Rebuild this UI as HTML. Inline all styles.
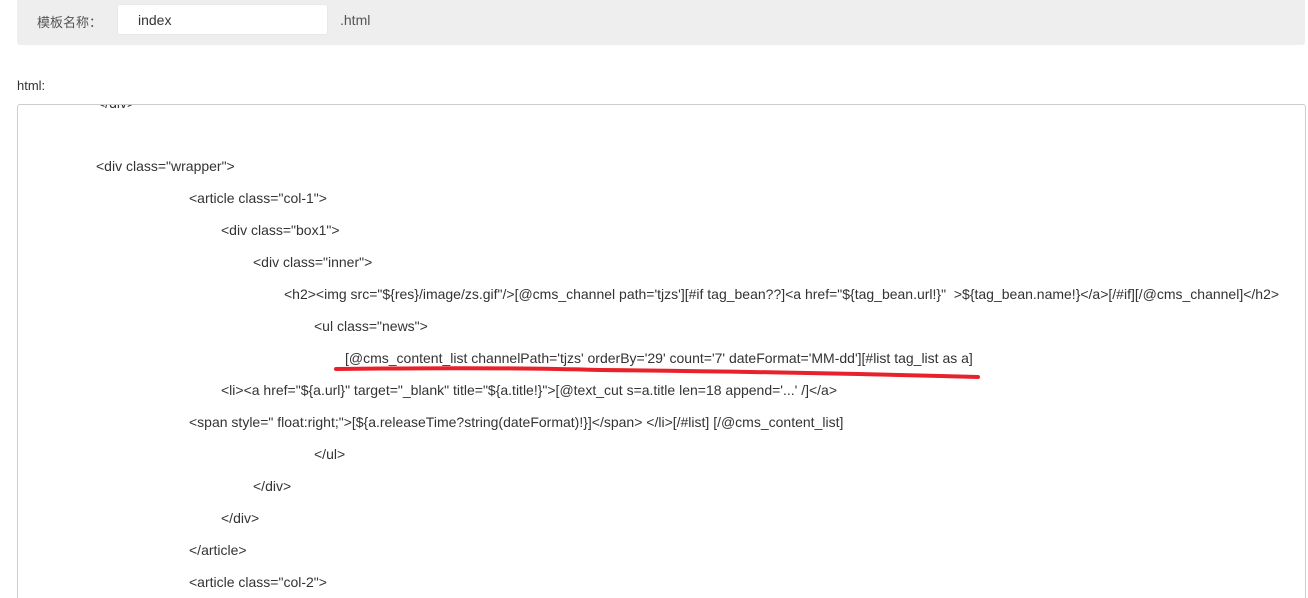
<!DOCTYPE html>
<html style="overflow:hidden"><head><meta charset="utf-8"><style>
html,body{margin:0;width:1308px;height:598px;overflow:hidden}
body{background:#fff;font-family:"Liberation Sans","Noto Sans CJK SC",sans-serif;font-size:13px;color:#333;position:relative}
.bar{position:absolute;left:17px;top:0;width:1288px;height:45px;background:#eee;border-radius:0 0 3px 3px}
.lbl{position:absolute;left:37px;top:12px;color:#555}
.inp{position:absolute;left:117px;top:4px;width:211px;height:31px;background:#fff;border-radius:3px;border:1px solid #e8e8e8;box-sizing:border-box}
.inp span{position:absolute;left:20px;top:7px;font-size:14px}
.ext{position:absolute;left:340px;top:12px;color:#555;font-size:14px}
.h{position:absolute;left:17px;top:78px}
.box{position:absolute;left:17px;top:104px;width:1289px;height:500px;border:1px solid #ccc;border-radius:3px;box-sizing:border-box;overflow:hidden}
.l{position:absolute;white-space:pre;line-height:16px;font-size:14px}
</style></head><body>
<div class="bar"></div>
<div class="lbl">模板名称：</div>
<div class="inp"><span>index</span></div>
<div class="ext">.html</div>
<div class="h">html:</div>
<div class="box">
<div class="l" style="left:79px;top:-10px">&lt;/div&gt;</div>
<div class="l" style="left:78px;top:53px">&lt;div class="wrapper"&gt;</div>
<div class="l" style="left:171px;top:85px">&lt;article class="col-1"&gt;</div>
<div class="l" style="left:203px;top:117px">&lt;div class="box1"&gt;</div>
<div class="l" style="left:235px;top:149px">&lt;div class="inner"&gt;</div>
<div class="l" style="left:266px;top:181px">&lt;h2&gt;&lt;img src="${res}/image/zs.gif"/&gt;[@cms_channel path='tjzs'][#if tag_bean??]&lt;a href="${tag_bean.url!}"  &gt;${tag_bean.name!}&lt;/a&gt;[/#if][/@cms_channel]&lt;/h2&gt;</div>
<div class="l" style="left:296px;top:213px">&lt;ul class="news"&gt;</div>
<div class="l" style="left:327px;top:245px">[@cms_content_list channelPath='tjzs' orderBy='29' count='7' dateFormat='MM-dd'][#list tag_list as a]</div>
<div class="l" style="left:203px;top:277px">&lt;li&gt;&lt;a href="${a.url}" target="_blank" title="${a.title!}"&gt;[@text_cut s=a.title len=18 append='...' /]&lt;/a&gt;</div>
<div class="l" style="left:171px;top:309px">&lt;span style=" float:right;"&gt;[${a.releaseTime?string(dateFormat)!}]&lt;/span&gt; &lt;/li&gt;[/#list] [/@cms_content_list]</div>
<div class="l" style="left:296px;top:341px">&lt;/ul&gt;</div>
<div class="l" style="left:235px;top:373px">&lt;/div&gt;</div>
<div class="l" style="left:203px;top:405px">&lt;/div&gt;</div>
<div class="l" style="left:171px;top:437px">&lt;/article&gt;</div>
<div class="l" style="left:171px;top:469px">&lt;article class="col-2"&gt;</div>
</div>
<svg style="position:absolute;left:0;top:0" width="1308" height="598"><path d="M336 369 Q500 367 600 370 Q800 372 978 377" stroke="#e8222a" stroke-width="4" fill="none" stroke-linecap="round"/></svg>
</body></html>
